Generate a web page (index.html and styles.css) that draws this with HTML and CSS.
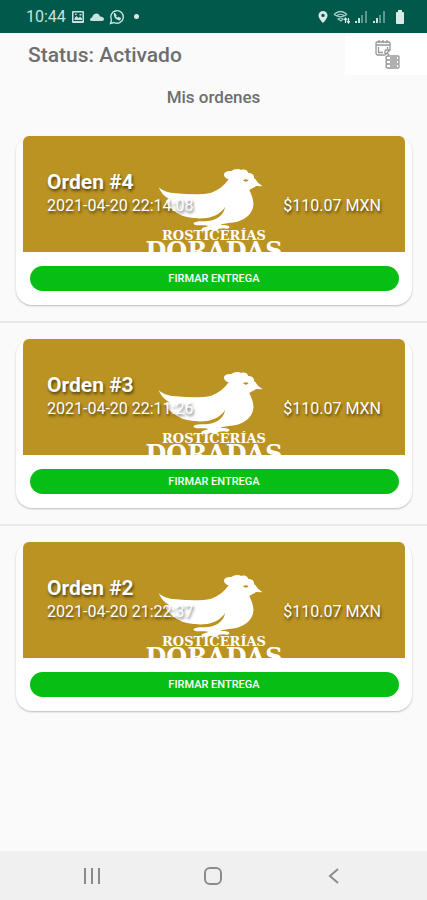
FILE: index.html
```html
<!DOCTYPE html>
<html lang="es">
<head>
<meta charset="utf-8">
<meta name="viewport" content="width=device-width, initial-scale=1">
<title>Mis ordenes</title>
<link rel="stylesheet" href="styles.css">
</head>
<body>
<svg class="defs" aria-hidden="true">
  <symbol id="hen" viewBox="28 22 318 189">
    <path fill="#fff" d="M30 80C42 90 58 97 82 98C120 101 158 103 188 96C210 89 228 73 240 56C232 54 225 48 226 40C228 32 238 30 248 31C256 24 270 23 278 28C288 24 298 30 299 37C310 36 318 45 316 52C322 56 324 61 328 66L342 77L322 76C316 82 308 83 302 88C308 102 316 118 314 135C311 158 292 175 266 183C250 187 230 187 216 191C222 195 234 192 241 197C246 203 234 206 226 203L210 204C208 210 194 210 186 207C174 211 158 211 158 206C162 199 172 199 181 196C168 190 152 197 138 192C128 187 142 183 156 182C180 183 200 177 212 168C222 160 228 149 229 138C220 156 198 168 174 172C148 176 116 171 98 164C84 157 66 146 54 130C48 121 55 116 62 116C46 107 36 94 30 80Z"/>
    <path fill="#bb9322" d="M283 59Q291 53 300 59Q292 67 283 59Z"/>
  </symbol>
</svg>

<header class="statusbar">
  <div class="group">
    <span class="clock">10:44</span>
    <svg class="icon-photo" width="14" height="14" viewBox="0 0 14 14"><path fill="#c9e2dd" fill-rule="evenodd" d="M2 1h10q1 0 1 1v10q0 1-1 1H2q-1 0-1-1V2q0-1 1-1zM2.500 2.500v8.500h9V2.500zM3.500 10V8l2-2 2 2 1.500-1.500L11 8.500V10zM4 3.500h1.500V5H4zM8.500 4h2v1.500h-2z"/></svg>
    <svg width="14" height="14" viewBox="0 0 14 14"><path fill="#c9e2dd" d="M2 11Q0 11 0 9.500T2 7.500Q3 4 6 3.500T10 6.500Q14 7 14 9T12 11Z"/></svg>
    <svg width="16" height="16" viewBox="0 0 16 16" fill="none" stroke="#c9e2dd"><path stroke-width="1.400" d="M1.500 14.500L2.500 11A6.300 6.300 0 1 1 5 13.500Z"/><path stroke-width="1.800" stroke-linecap="round" d="M5.700 5Q5.500 9.500 10.500 10.500L11 9.500 9.500 8.700M5.700 5L6.700 6.500"/></svg>
    <span class="dot"></span>
  </div>
  <div class="group right">
    <svg width="10" height="14" viewBox="0 0 10 14"><path fill="#d8e9e6" fill-rule="evenodd" d="M5 1A4.500 4.500 0 0 0 .5 5.500C.5 8.500 5 13 5 13S9.500 8.500 9.500 5.500A4.500 4.500 0 0 0 5 1ZM5 3.700A1.700 1.700 0 1 1 5 7.100 1.700 1.700 0 0 1 5 3.700Z"/></svg>
    <svg width="17" height="14" viewBox="0 0 17 14" fill="none" stroke="#a9cdc7" stroke-width="1.200"><path d="M1 4.500Q7.500-1.500 14 4.500M3 6Q7.500 2.500 12 6M1 4.500Q7.500 9 14 4.500M5 9Q7.500 7 10 9L8 11Z"/><path stroke="#d8e9e6" d="M12.500 13V8M11 10l1.500-2L14 10M15.500 8v5M14 11l1.500 2 1.500-2"/></svg>
    <svg width="13" height="12" viewBox="0 0 13 12"><path fill="#c9e2dd" d="M0 10h2v2H0zM3 7h2v5H3z"/><path fill="#5c978d" d="M6 4h2v8H6zM10 0h2v12h-2z"/></svg>
    <svg width="13" height="12" viewBox="0 0 13 12"><path fill="#c9e2dd" d="M0 10h2v2H0zM3 7h2v5H3z"/><path fill="#5c978d" d="M6 4h2v8H6zM10 0h2v12h-2z"/></svg>
    <svg class="battery" width="10" height="14" viewBox="0 0 10 14"><path fill="#d8e9e6" d="M3 0h4v2h1q1 0 1 1v10q0 1-1 1H2q-1 0-1-1V3q0-1 1-1h1z"/></svg>
  </div>
</header>

<main>
  <div class="topline">
    <h1>Status: Activado</h1>
    <button class="orders-button" type="button" aria-label="Ordenes">
      <svg width="26" height="32" viewBox="0 0 26 32" fill="none" stroke="#969696" stroke-width="1.300"><path d="M10 17H4Q2 17 2 15V5Q2 4 3 4H15Q16 4 16 5V12L11 17V13Q11 12 12 12H16M2 7H16M5 2V5M9 2V5M13 2V5M4.500 9V14.500H9M13.500 9V11"/><path d="M14 18H24Q25 18 25 19V21Q25 22 24 22H14Q12 22 12 20T14 18ZM14 22H24Q25 22 25 23V25Q25 26 24 26H14Q12 26 12 24T14 22ZM14 26H24Q25 26 25 27V29Q25 30 24 30H14Q12 30 12 28T14 26ZM16 20H23M16 24H23M16 28H23M13 15L15 17"/></svg>
    </button>
  </div>
  <h2>Mis ordenes</h2>

  <ul class="orders">
    <li>
      <article class="card">
        <div class="banner">
          <div class="brand"><svg class="hen"><use href="#hen"/></svg><span class="brand-small">ROSTICERÍAS</span><span class="brand-large">DORADAS</span></div>
          <div class="details"><h3>Orden #4</h3><p><time>2021-04-20 22:14:08</time><span>$110.07 MXN</span></p></div>
        </div>
        <button class="sign" type="button">FIRMAR ENTREGA</button>
      </article>
    </li>
    <li>
      <article class="card">
        <div class="banner">
          <div class="brand"><svg class="hen"><use href="#hen"/></svg><span class="brand-small">ROSTICERÍAS</span><span class="brand-large">DORADAS</span></div>
          <div class="details"><h3>Orden #3</h3><p><time>2021-04-20 22:11:26</time><span>$110.07 MXN</span></p></div>
        </div>
        <button class="sign" type="button">FIRMAR ENTREGA</button>
      </article>
    </li>
    <li>
      <article class="card">
        <div class="banner">
          <div class="brand"><svg class="hen"><use href="#hen"/></svg><span class="brand-small">ROSTICERÍAS</span><span class="brand-large">DORADAS</span></div>
          <div class="details"><h3>Orden #2</h3><p><time>2021-04-20 21:22:37</time><span>$110.07 MXN</span></p></div>
        </div>
        <button class="sign" type="button">FIRMAR ENTREGA</button>
      </article>
    </li>
  </ul>
</main>

<nav class="navbar">
  <button type="button" aria-label="Recientes"><svg width="20" height="20" viewBox="0 0 20 20" stroke="#8b8b8b" stroke-width="2"><path d="M3 2V18M10 2V18M17 2V18"/></svg></button>
  <button type="button" aria-label="Inicio"><svg width="20" height="20" viewBox="0 0 20 20" fill="none" stroke="#8b8b8b" stroke-width="2"><rect x="2" y="2" width="16" height="16" rx="5"/></svg></button>
  <button type="button" aria-label="Atrás"><svg width="20" height="20" viewBox="0 0 20 20" fill="none" stroke="#8b8b8b" stroke-width="2"><path d="M14 3L6 10L14 17"/></svg></button>
</nav>
</body>
</html>
```
FILE: styles.css
```css
* { box-sizing: border-box; }

body {
  margin: 0;
  min-height: 100vh;
  display: flex;
  flex-direction: column;
  background: #fafafa;
  color: #6e6e6e;
  font-family: Roboto, "Liberation Sans", sans-serif;
}

h1, h2, h3, p, ul { margin: 0; padding: 0; }
button { border: 0; padding: 0; font: inherit; }
svg { display: block; }
.defs { position: absolute; width: 0; height: 0; }

.statusbar {
  height: 33px;
  padding: 0 22px 0 26px;
  display: flex;
  align-items: center;
  justify-content: space-between;
  background: #00594b;
  color: #c9e2dd;
}
.group { display: flex; align-items: center; gap: 5px; }
.battery { margin-left: 4px; }
.clock { font-size: 16px; line-height: 20px; }
.dot { width: 5px; height: 5px; margin-left: 4px; border-radius: 50%; background: #d8e9e6; }

main { flex: 1; }
.topline { display: flex; justify-content: space-between; }
h1 {
  padding: 10px 0 0 28px;
  font-size: 21px;
  line-height: 24px;
  font-weight: 500;
}
.orders-button {
  width: 82px;
  height: 42px;
  padding-left: 2px;
  display: grid;
  place-items: center;
  background: #fff;
}
h2 {
  padding: 12px 0;
  font-size: 17px;
  line-height: 20px;
  font-weight: 500;
  text-align: center;
}

.orders { list-style: none; }
.orders li { padding: 17px 15px 16px 16px; }
.orders li + li { border-top: 2px solid #e9e9e9; padding-top: 16px; }
.card {
  padding: 0 7px 14px;
  border-radius: 16px;
  background: #fff;
  box-shadow: 0 1px 2px rgba(0, 0, 0, 0.25);
}
.banner {
  position: relative;
  height: 116px;
  padding: 34px 24px 0;
  overflow: hidden;
  border-radius: 6px 6px 0 0;
  background: #bb9322;
  color: #fff;
}
.brand {
  position: absolute;
  inset: 32px 0 0;
  display: flex;
  flex-direction: column;
  align-items: center;
  font-family: "DejaVu Serif", serif;
  font-weight: 700;
}
.hen { width: 106px; height: 63px; flex: none; margin-right: 6px; }
.brand-small { font-size: 13px; line-height: 10px; }
.brand-large { font-size: 24px; line-height: 20px; }
.details { position: relative; text-shadow: 1px 2px 3px rgba(0, 0, 0, 0.6); }
h3 { font-size: 21px; line-height: 24px; font-weight: 700; }
.details p {
  display: flex;
  justify-content: space-between;
  font-size: 16px;
  line-height: 24px;
}
.sign {
  display: block;
  width: calc(100% - 13px);
  height: 25px;
  margin: 14px auto 0;
  border-radius: 13px;
  background: #06be14;
  color: #fff;
  font-size: 11px;
  line-height: 25px;
  font-weight: 500;
}

.navbar {
  height: 49px;
  padding: 0 33px 0 32px;
  display: grid;
  grid-template-columns: repeat(3, 1fr);
  place-items: center;
  background: #f0f0f0;
}
.navbar button { width: 48px; height: 48px; display: grid; place-items: center; background: none; }
```
